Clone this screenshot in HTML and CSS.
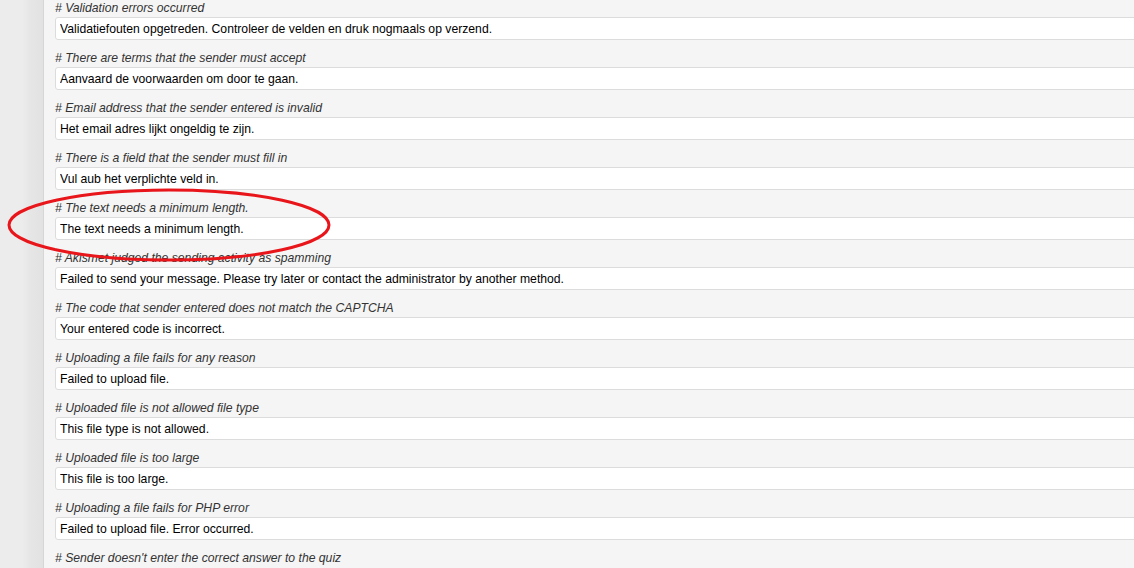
FILE: index.html
```html
<!DOCTYPE html>
<html>
<head>
	<meta charset="UTF-8">
	<title>Messages</title>
	<link rel="stylesheet" href="styles.css">
</head>
<body>
<div class="page">
	<div class="side"></div>
	<div class="main">
		<div class="row">
			<p class="label"># Validation errors occurred</p>
			<input class="msg" type="text" value="Validatiefouten opgetreden. Controleer de velden en druk nogmaals op verzend.">
		</div>
		<div class="row">
			<p class="label"># There are terms that the sender must accept</p>
			<input class="msg" type="text" value="Aanvaard de voorwaarden om door te gaan.">
		</div>
		<div class="row">
			<p class="label"># Email address that the sender entered is invalid</p>
			<input class="msg" type="text" value="Het email adres lijkt ongeldig te zijn.">
		</div>
		<div class="row">
			<p class="label"># There is a field that the sender must fill in</p>
			<input class="msg" type="text" value="Vul aub het verplichte veld in.">
		</div>
		<div class="row">
			<p class="label"># The text needs a minimum length.</p>
			<input class="msg" type="text" value="The text needs a minimum length.">
		</div>
		<div class="row">
			<p class="label"># Akismet judged the sending activity as spamming</p>
			<input class="msg" type="text" value="Failed to send your message. Please try later or contact the administrator by another method.">
		</div>
		<div class="row">
			<p class="label"># The code that sender entered does not match the CAPTCHA</p>
			<input class="msg" type="text" value="Your entered code is incorrect.">
		</div>
		<div class="row">
			<p class="label"># Uploading a file fails for any reason</p>
			<input class="msg" type="text" value="Failed to upload file.">
		</div>
		<div class="row">
			<p class="label"># Uploaded file is not allowed file type</p>
			<input class="msg" type="text" value="This file type is not allowed.">
		</div>
		<div class="row">
			<p class="label"># Uploaded file is too large</p>
			<input class="msg" type="text" value="This file is too large.">
		</div>
		<div class="row">
			<p class="label"># Uploading a file fails for PHP error</p>
			<input class="msg" type="text" value="Failed to upload file. Error occurred.">
		</div>
		<div class="row">
			<p class="label"># Sender doesn't enter the correct answer to the quiz</p>
		</div>
	</div>
	<svg class="mark" width="326" height="80" viewBox="0 0 326 80">
		<ellipse cx="163" cy="38" rx="160" ry="35" fill="none" stroke="#e8161b" stroke-width="3"/>
	</svg>
</div>
</body>
</html>
```

FILE: styles.css
```css
html, body {
	margin: 0;
	overflow: hidden;
}
body {
	font-family: "Liberation Sans", Arial, sans-serif;
	background: #ececec;
}
.page {
	position: relative;
	display: flex;
	height: 568px;
	overflow: hidden;
}
.side {
	width: 43px;
	flex-shrink: 0;
	background: linear-gradient(to right, #ececec 22px, #e6e6e6 30px, #e2e2e2 42px);
	border-right: 1px solid #d6d6d6;
}
.main {
	flex: 1;
	min-width: 0;
	overflow: hidden;
	background: #f5f5f5;
	padding-left: 11px;
}
.row {
	height: 50px;
}
.label {
	margin: 0 0 1px;
	padding-top: 1px;
	font-size: 12.2px;
	line-height: 15px;
	font-style: italic;
	color: #333;
}
.msg {
	box-sizing: border-box;
	display: block;
	width: 1200px;
	height: 23px;
	margin: 0;
	padding: 0 4px;
	font-family: "Liberation Sans", Arial, sans-serif;
	font-size: 12.2px;
	color: #000;
	background: #fff;
	border: 1px solid #dcdcdc;
	border-radius: 3px;
	outline: none;
}
.mark {
	position: absolute;
	left: 6px;
	top: 187px;
}
```
